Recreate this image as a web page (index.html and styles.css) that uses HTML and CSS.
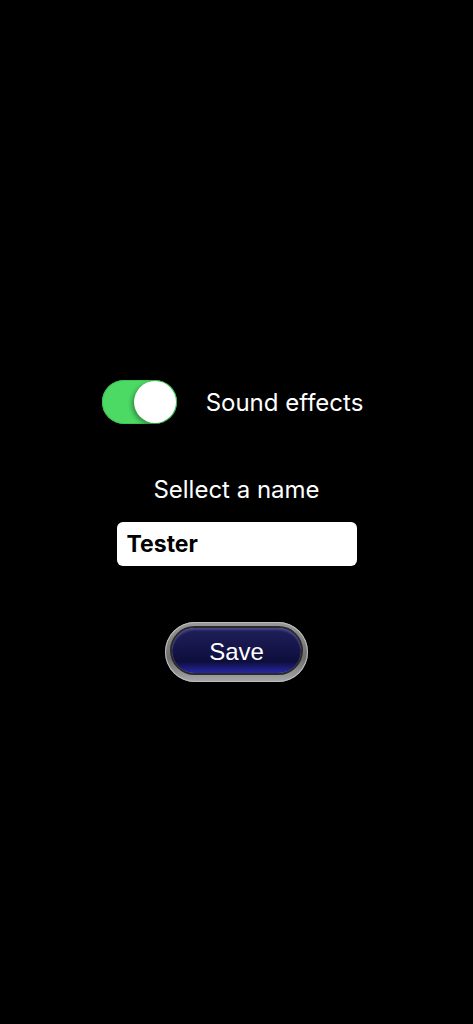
FILE: index.html
```html
<!DOCTYPE html>
<html lang="en">
<head>
    <meta charset="UTF-8">
    <meta name="viewport" content="width=device-width, initial-scale=1.0">
    <title>Settings</title>
    <link rel="stylesheet" href="styles.css">
</head>
<body>
    <main class="settings">
        <div class="sound-row">
            <label class="switch">
                <input type="checkbox" checked>
                <span class="track"><span class="knob"></span></span>
            </label>
            <span class="sound-label">Sound effects</span>
        </div>

        <p class="name-title">Sellect a name</p>
        <input class="name-input" type="text" value="Tester">

        <button class="save-btn"><span class="save-inner">Save</span></button>
    </main>
</body>
</html>
```

FILE: styles.css
```css
* {
    margin: 0;
    padding: 0;
    box-sizing: border-box;
}
body {
    background-color: #000;
    color: #fff;
    font-family: Inter, "Liberation Sans", Arial, sans-serif;
    min-height: 100vh;
}
.settings {
    display: flex;
    flex-direction: column;
    align-items: center;
    padding-top: 380px;
}

/* sound toggle row */
.sound-row {
    display: flex;
    align-items: center;
    gap: 29px;
    padding-right: 8px;
}
.switch input {
    display: none;
}
.track {
    display: flex;
    align-items: center;
    justify-content: flex-end;
    width: 75px;
    height: 44px;
    padding: 0 1px;
    border-radius: 22px;
    background-color: #4cd964;
    box-shadow: inset 0 0 0 1px #3cc455;
}
.knob {
    width: 42px;
    height: 42px;
    border-radius: 50%;
    background: #fff;
    box-shadow: -2px 2px 4px rgba(0, 0, 0, 0.35);
}
.sound-label {
    font-size: 24px;
    line-height: 29px;
}

/* name field */
.name-title {
    margin-top: 51px;
    font-size: 24px;
    line-height: 29px;
}
.name-input {
    margin-top: 18px;
    width: 240px;
    height: 44px;
    border: none;
    border-radius: 6px;
    padding: 0 10px;
    font-family: inherit;
    font-size: 23px;
    font-weight: 700;
    color: #000;
    background: #fff;
    outline: none;
}

/* glossy save button */
.save-btn {
    margin-top: 56px;
    width: 143px;
    height: 60px;
    padding: 6px 7px 9px;
    border: none;
    border-radius: 30px;
    background: linear-gradient(#9a9a9a, #6e6e6e 60%, #a8a8a8);
    box-shadow: inset 0 0 0 1px #bdbdbd;
    cursor: pointer;
}
.save-inner {
    display: flex;
    align-items: center;
    justify-content: center;
    height: 100%;
    border-radius: 23px;
    background: linear-gradient(#20205a 0%, #15154a 45%, #0e0e3c 75%, #2626a6 100%);
    box-shadow: 0 0 0 2px #2a2a2a, inset 0 2px 2px rgba(140, 140, 220, 0.35);
    color: #fff;
    font-family: inherit;
    font-size: 24px;
    padding-top: 2px;
}
```
